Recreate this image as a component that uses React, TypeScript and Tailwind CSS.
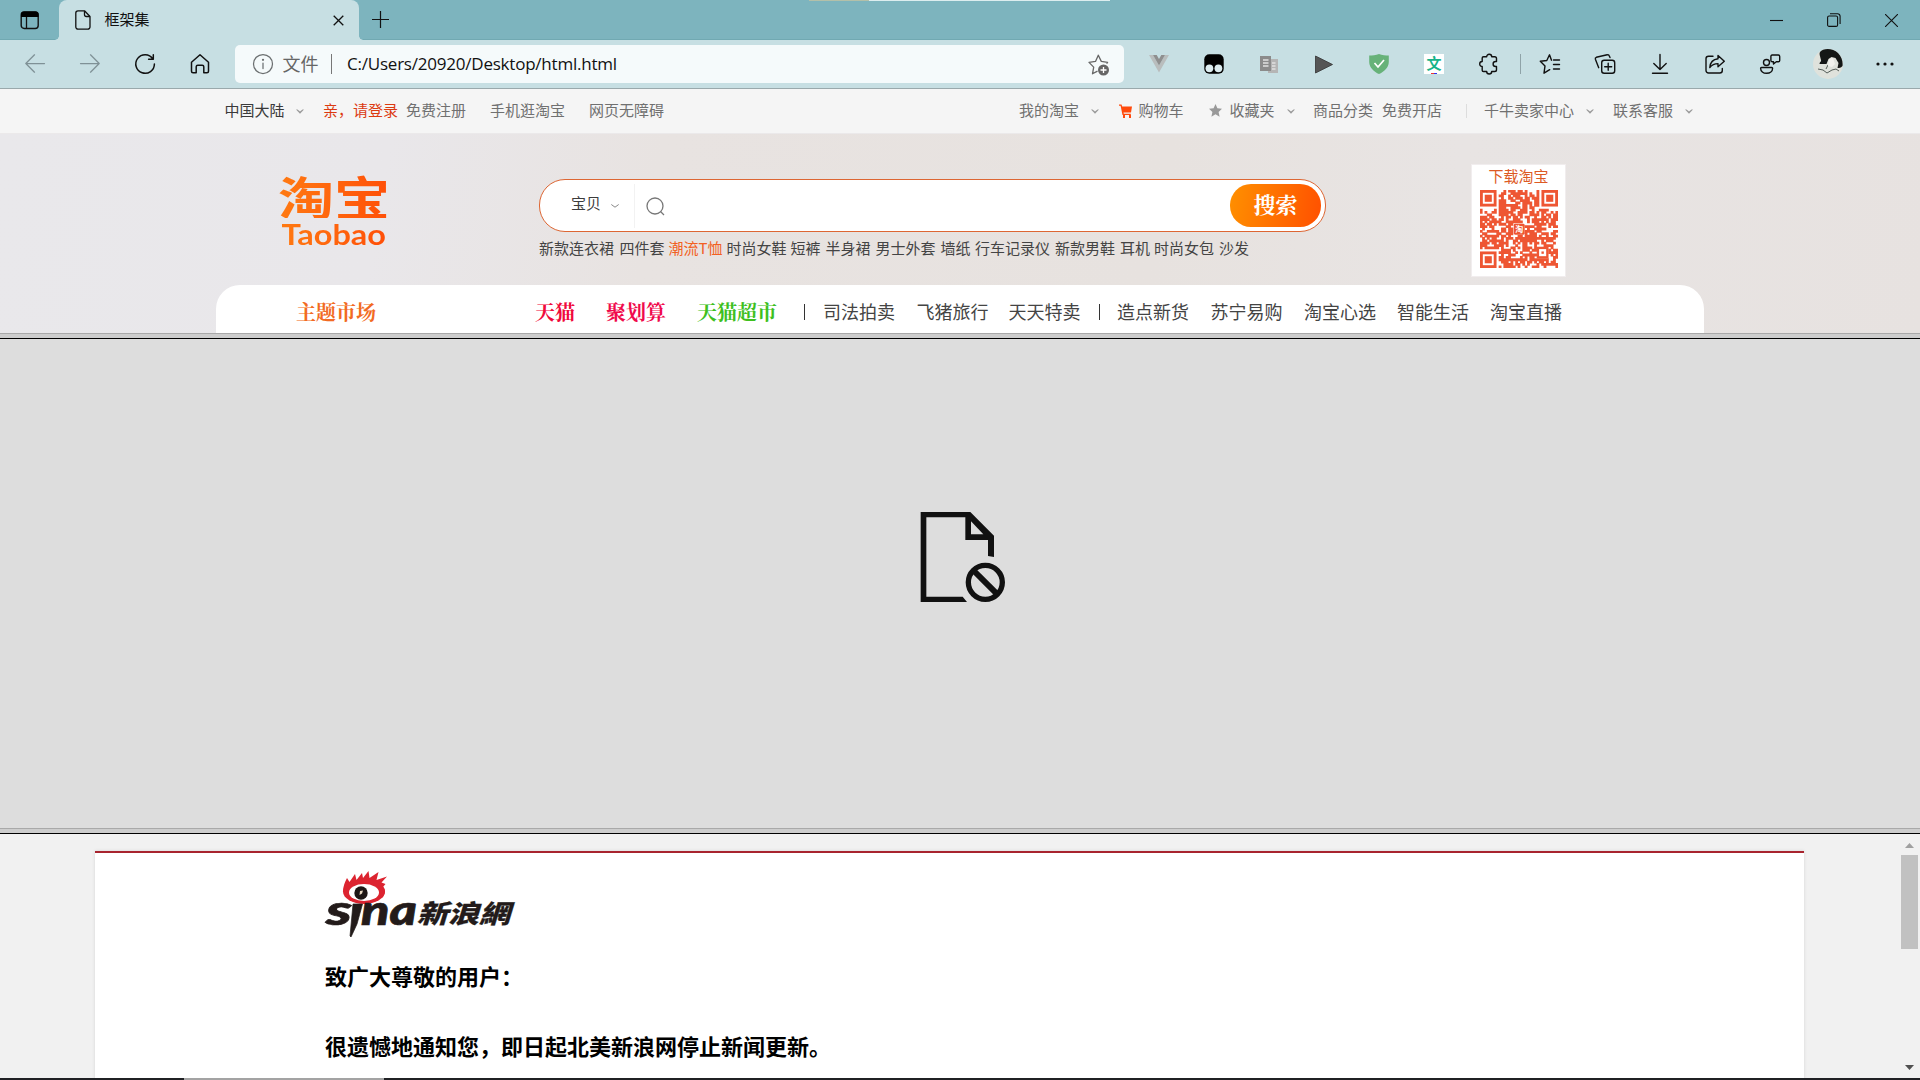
import React from 'react';

const SANS = "font-['Noto_Sans_CJK_SC',sans-serif]";
const SERIF = "font-['Noto_Serif_CJK_SC','Noto_Sans_CJK_SC',serif]";

function Cell({ children }: { children: React.ReactNode }) {
  return <div className="flex h-12 w-[55px] shrink-0 items-center justify-center">{children}</div>;
}

function Icon({ children, color = '#111', width = 1.25, size = 20 }: { children: React.ReactNode; color?: string; width?: number; size?: number }) {
  return (
    <svg width={size} height={size} viewBox="0 0 20 20" fill="none" stroke={color} strokeWidth={width} strokeLinecap="round" strokeLinejoin="round" className="shrink-0 overflow-visible">
      {children}
    </svg>
  );
}

function TitleBar() {
  return (
    <div className="relative flex h-10 bg-[#7db4be] shadow-[inset_0_-1px_0_#71a9b2]">
      <div className="flex w-[59px] items-center pl-5">
        <svg width="20" height="20" viewBox="0 0 20 20" fill="none">
          <rect x="1.2" y="2" width="17" height="16.5" rx="3" stroke="#111" strokeWidth="1.4" />
          <path d="M1 7V4.5a3 3 0 0 1 3-3h11.5a3 3 0 0 1 3 3V7z" fill="#000" />
          <path d="M6.5 7v11.5" stroke="#111" strokeWidth="1.3" />
        </svg>
      </div>
      <div className="relative flex w-[300px] items-center rounded-t-lg bg-[#c7dfe3]">
        <span className="absolute bottom-0 -left-1 h-1 w-1 bg-[radial-gradient(circle_at_0_0,#7db4be_3.5px,#c7dfe3_4px)]" />
        <span className="absolute -right-1 bottom-0 h-1 w-1 bg-[radial-gradient(circle_at_100%_0,#7db4be_3.5px,#c7dfe3_4px)]" />
        <svg width="16" height="20" viewBox="0 0 16 20" fill="none" stroke="#111" strokeWidth="1.3" strokeLinejoin="round" className="ml-4">
          <path d="M3 .8h6.5L15 6.500V17a2.200 2.200 0 0 1-2.200 2.200H3A2.200 2.200 0 0 1 .8 17V3A2.200 2.200 0 0 1 3 .8z" />
          <path d="M9.500 1v3.800c0 1 .7 1.700 1.700 1.700H15" />
        </svg>
        <span className={`${SANS} mb-[3px] ml-[13.500px] w-[228px] text-[15px] leading-none text-[#111]`}>框架集</span>
        <svg width="11" height="11" viewBox="0 0 11 11" stroke="#111" strokeWidth="1.3" className="mt-px">
          <path d="M.7.7l9.600 9.600M10.300.7L.7 10.300" />
        </svg>
      </div>
      <svg width="17" height="17" viewBox="0 0 17 17" stroke="#111" strokeWidth="1.200" className="mt-[11px] ml-[13px]">
        <path d="M8.500 0v17M0 8.500h17" />
      </svg>
      <div className="ml-auto flex items-center pr-[22px]">
        <svg width="13" height="13" viewBox="0 0 13 13" stroke="#111" strokeWidth="1.100"><path d="M0 6.500h13" /></svg>
        <svg width="14" height="14" viewBox="0 0 14 14" fill="none" stroke="#111" strokeWidth="1.100" className="ml-11">
          <rect x=".6" y="3" width="10" height="10.400" rx="1.500" />
          <path d="M3 .8h7.500a2.500 2.500 0 0 1 2.600 2.500V11" />
        </svg>
        <svg width="13" height="13" viewBox="0 0 13 13" stroke="#111" strokeWidth="1.100" className="ml-11"><path d="M0 0l13 13M13 0L0 13" /></svg>
      </div>
      <div className="absolute top-0 left-[809px] flex h-px">
        <span className="w-[60px] bg-[#b3c0a9]" />
        <span className="w-[241px] bg-[#dcedef]" />
      </div>
    </div>
  );
}

function Toolbar() {
  return (
    <div className="flex h-12 items-center bg-[#c7dfe3] pl-[7.500px]">
      <Cell><Icon color="#7f9196"><path d="M19.500 9.500H.8M9.500.8L.8 9.500l8.700 8.700" /></Icon></Cell>
      <Cell><Icon color="#7f9196"><path d="M.5 9.500h18.700M10.500.8l8.700 8.700-8.700 8.700" /></Icon></Cell>
      <Cell><Icon width={1.500}><path d="M17.800 4.800A9.300 9.300 0 1 0 19.400 10M18.300.8v4.500h-4.700" /></Icon></Cell>
      <Cell><Icon width={1.500}><path d="M1.500 8.300L10 .8l8.500 7.500v9c0 .9-.6 1.500-1.500 1.500h-3.200v-6c0-1-.6-1.600-1.600-1.600H7.800c-1 0-1.600.6-1.600 1.600v6H3c-.9 0-1.500-.6-1.500-1.500z" /></Icon></Cell>
      <div className="ml-[7.500px] flex h-[38px] w-[889px] shrink-0 items-center rounded-[5px] bg-[#f5fafb]">
        <div className="ml-[18px] flex"><Icon color="#6b6f70"><circle cx="10" cy="10" r="9.500" /><path d="M10 9v5.500" /><circle cx="10" cy="5.800" r=".5" fill="#6b6f70" /></Icon></div>
        <span className={`${SANS} mb-[2px] ml-[9.500px] w-[48.500px] text-[18px] leading-none text-[#666]`}>文件</span>
        <span className="h-5 w-px bg-[#777]" />
        <span className="mb-[2px] ml-[15px] w-[741px] font-['Open_Sans',sans-serif] text-[17px] leading-none tracking-[-0.220px] whitespace-nowrap text-[#111]">C:/Users/20920/Desktop/html.html</span>
        <svg width="22" height="22" viewBox="0 0 22 22" fill="none" className="mt-px">
          <path d="M18.600 9.600l1-1.200-6.300-1L10.300 1.200 7.500 7.400l-6.500 1 4.700 4.700-1.200 6.700 5-2.700" stroke="#666" strokeWidth="1.300" strokeLinejoin="round" />
          <circle cx="15.500" cy="16" r="5.500" fill="#666" />
          <path d="M15.500 13v6M12.500 16h6" stroke="#fff" strokeWidth="1.300" />
        </svg>
      </div>
      <div className="ml-[7.500px] flex">
        <Cell><svg width="20" height="18" viewBox="0 0 20 18"><path d="M0 0h4l6 10.500L16 0h4L10 17.500z" fill="#b9bdbd" /><path d="M4 0h3.700L10 4l2.300-4H16l-6 10.500z" fill="#8f8f8f" /></svg></Cell>
        <Cell><svg width="20" height="20" viewBox="0 0 20 20"><rect x=".3" y=".3" width="19.400" height="19.400" rx="5" fill="#000" /><circle cx="5.400" cy="14.300" r="3.900" fill="#dcecef" /><circle cx="14.400" cy="14.300" r="3.900" fill="#dcecef" /></svg></Cell>
        <Cell><svg width="18" height="18" viewBox="0 0 18 18"><path d="M8 4h10v14H8z" fill="#b5b5b5" /><path d="M0 1h11v15H0z" fill="#8b8b8b" /><path d="M3 5h5.500M3 8h5.500M3 11h5.500M12 8h3.500M12 11h3.500M12 14h3.500" stroke="#e1e1e1" strokeWidth="1.400" /></svg></Cell>
        <Cell><svg width="18" height="19" viewBox="0 0 18 19"><path d="M.5 1v17l17-8.500z" fill="#555" stroke="#333" strokeWidth=".8" /></svg></Cell>
        <Cell><svg width="20" height="20" viewBox="0 0 20 20"><path d="M10 0c3 1.500 7 1.500 9.800 1.500V8c0 5.500-5 10-9.800 12C5.200 18 .2 13.500.2 8V1.500C3 1.500 7 1.500 10 0z" fill="#67b279" /><path d="M5.500 9l3.500 4 6-7" fill="none" stroke="#fff" strokeWidth="1.700" /></svg></Cell>
        <Cell>
          <div className="flex h-5 w-5 flex-col items-center bg-white">
            <span className={`${SANS} mt-px h-[18px] text-[15px] leading-[16px] font-bold text-[#18b389]`}>文</span>
            <span className="flex h-px"><i className="w-[3px] bg-[#e33]" /><i className="w-[3px] bg-[#33e]" /></span>
          </div>
        </Cell>
        <Cell><Icon width={1.400}><path d="M4.500 2.800h3.200a2.500 2.500 0 0 1 5 0h3a1.800 1.800 0 0 1 1.800 1.800v2.900h-.9a2.500 2.500 0 0 0 0 5h.9v3.200a1.800 1.800 0 0 1-1.800 1.800h-3a2.500 2.500 0 0 1-5 0H4.500a1.300 1.300 0 0 1-1.300-1.300v-3.700a2.500 2.500 0 0 1 0-5V4.100a1.300 1.300 0 0 1 1.300-1.300z" /></Icon></Cell>
      </div>
      <span className="mr-[1.500px] ml-[3px] h-5 w-px bg-[#8fa3a8]" />
      <Cell><Icon width={1.400}><path d="M11.500 6.200L9.500.8 6.800 6.500l-6.500.8 4.700 4.600-1 7.300 5.700-3.500M13.500 6h6M13.500 10.500h6M13.500 15h6" /></Icon></Cell>
      <Cell><Icon width={1.400}><rect x="6.700" y="6.200" width="13" height="13" rx="2.500" /><path d="M13.200 9.200v7M9.700 12.700h7M15 3.500L14.200 1.700a1.500 1.500 0 0 0-2-.9L1.300 3.300A1.500 1.500 0 0 0 .4 5.200l3.300 8.500" /></Icon></Cell>
      <Cell><Icon width={1.400}><path d="M10 .5v15M3.800 9.500l6.200 6 6.200-6M2.500 19.200h15" /></Icon></Cell>
      <Cell><Icon width={1.400}><path d="M8 2.200H3.500a2.500 2.500 0 0 0-2.500 2.500v11.800A2.500 2.500 0 0 0 3.500 19h11.300a2.500 2.500 0 0 0 2.500-2.500v-2" /><path d="M13 1.500l6.300 5.800-6.300 5.500V9.600c-3.500 0-6 1-8.200 4C5.200 8.500 8 5.300 13 4.800z" /></Icon></Cell>
      <Cell><Icon width={1.400}><circle cx="6.500" cy="8.500" r="3" /><path d="M1.500 13.500h10.300c.5 0 .8.3.8.8 0 3-2.600 5-6 5s-6-2-6-5c0-.5.400-.8.900-.8zM12 1h6.300A1.400 1.400 0 0 1 19.700 2.400v4A1.400 1.400 0 0 1 18.300 7.800h-2L13.500 10V7.800h-1.200a1.400 1.400 0 0 1-1.400-1.400v-4A1.400 1.400 0 0 1 12 1z" /></Icon></Cell>
      <div className="flex w-[61px] shrink-0 justify-center">
        <svg width="30" height="30" viewBox="0 0 30 30">
          <circle cx="15" cy="15" r="15" fill="#dfe2dc" />
          <path d="M7 3C10-1 20-1 25 4c4 4 5 9 4.500 13-2 2-3 2-5 2l1-5-3-5-4-1-3 2-2 5-7 0c0-2 2-2 1.500-4-1-4-2-6-1-8z" fill="#141716" />
          <path d="M5 20l5 1 4 3 5-3 4-1 3 2M15 16l-2 4" fill="none" stroke="#555e59" strokeWidth="1" />
          <path d="M16 10l4-1 2 6-3 3-4-1z" fill="#f1f1ed" />
        </svg>
      </div>
      <div className="flex w-[54px] shrink-0 justify-center"><svg width="18" height="4" viewBox="0 0 18 4" fill="#111"><circle cx="2" cy="2" r="1.600" /><circle cx="9" cy="2" r="1.600" /><circle cx="16" cy="2" r="1.600" /></svg></div>
    </div>
  );
}

function Caret() {
  return <svg width="8" height="5" viewBox="0 0 8 5" className="mt-[3px] shrink-0"><path d="M0 .5h1.500L4 2.500 6.500.5H8L4 4.700z" fill="#999" /></svg>;
}

function SiteNav() {
  return (
    <div className={`${SANS} flex h-[45px] items-center border-b border-[#ebe9ea] bg-[#f5f5f5] pb-[3px] pl-[224.500px] text-[15px] leading-none font-normal whitespace-nowrap text-[#707070] *:shrink-0`}>
      <span className="w-[71.500px] text-[#3a3a3a]">中国大陆</span>
      <span className="w-[27px]"><Caret /></span>
      <span className="w-[83px] text-[#dc3a10]">亲，请登录</span>
      <span className="w-[84px]">免费注册</span>
      <span className="w-[99px]">手机逛淘宝</span>
      <span className="w-[430px]">网页无障碍</span>
      <span className="w-[72px]">我的淘宝</span>
      <span className="w-[28px]"><Caret /></span>
      <svg width="13" height="14" viewBox="0 0 13 14" className="mt-[2px] mr-[6.500px]">
        <path d="M0 .5h2.500l.7 2H13l-1 6H4.500l.3 1.300h7V11H3.500L1.600 1.800H0z" fill="#ff4a0c" />
        <path d="M4 11h2v3H4zM10 11h2v3h-2z" fill="#ff4a0c" />
      </svg>
      <span className="w-[70px]">购物车</span>
      <svg width="13" height="13" viewBox="0 0 13 13" className="mt-[2px] mr-[8px]"><path d="M6.500 0l1.900 4.300 4.600.5-3.400 3.100 1 4.800-4.100-2.500-4.100 2.500 1-4.800L0 4.800l4.600-.5z" fill="#999" /></svg>
      <span className="w-[57px]">收藏夹</span>
      <span className="w-[26.500px]"><Caret /></span>
      <span className="w-[69px]">商品分类</span>
      <span className="w-[84px]">免费开店</span>
      <span className="mt-[2px] h-[14px] w-px bg-[#ddd]" />
      <span className="ml-[17px] w-[102px]">千牛卖家中心</span>
      <span className="w-[27px]"><Caret /></span>
      <span className="w-[72px]">联系客服</span>
      <Caret />
    </div>
  );
}

const N = 33;
function qrCells(): string {
  let seed = 20411;
  let d = '';
  for (let y = 0; y < N; y++) {
    for (let x = 0; x < N; x++) {
      seed = (seed * 1103515245 + 12345) % 2147483648;
      const dark = (seed >> 12) % 100 < 62;
      const inFinder = (x < 8 && y < 8) || (x > N - 9 && y < 8) || (x < 8 && y > N - 9);
      const inLogo = x > 13 && x < 19 && y > 13 && y < 19;
      const inAlign = x > 23 && x < 29 && y > 23 && y < 29;
      if (dark && !inFinder && !inLogo && !inAlign) d += `M${x - 0.1} ${y - 0.1}h1.200v1.200h-1.200z`;
    }
  }
  return d;
}

function QrCode() {
  const corners = [[0, 0], [N - 7, 0], [0, N - 7]];
  return (
    <svg width="78" height="78" viewBox="0 0 33 33">
      <path d={qrCells()} fill="#ee5633" />
      {corners.map(([x, y]) => (
        <g key={`${x}-${y}`}>
          <rect x={x + 0.6} y={y + 0.6} width="5.800" height="5.800" fill="none" stroke="#ee5633" strokeWidth="1.200" />
          <rect x={x + 2} y={y + 2} width="3" height="3" fill="#ee5633" />
        </g>
      ))}
      <rect x="24.500" y="24.500" width="4" height="4" fill="none" stroke="#ee5633" />
      <rect x="26" y="26" width="1" height="1" fill="#ee5633" />
      <rect x="14.300" y="14.300" width="4.600" height="4.600" rx=".6" fill="#ee5633" />
      <text x="16.600" y="17.900" fontSize="3.400" textAnchor="middle" fill="#fff" fontFamily="Noto Sans CJK SC" fontWeight="700">淘</text>
    </svg>
  );
}

function TaobaoFrame() {
  return (
    <div className="flex h-[199px] flex-col bg-[linear-gradient(100deg,#e9e8eb_0%,#e9e7ea_20%,#e8e3e1_34%,#e7e2df_60%,#e8e4e3_75%,#e7e2e0_100%)]">
      <div className="flex h-[151px] pl-[276px]">
        <div className="flex w-[116px] shrink-0 flex-col items-center pt-[38px]">
          <span className={`${SANS} scale-x-[1.220] bg-[linear-gradient(90deg,#ff7a12,#ff4f08)] bg-clip-text text-[46px] leading-[46px] font-bold whitespace-nowrap text-transparent`}>淘宝</span>
          <span className="mt-[2px] scale-x-[1.120] bg-[linear-gradient(90deg,#ff7a12,#ff4f08)] bg-clip-text font-['Lato',sans-serif] text-[29px] leading-[28px] font-bold text-transparent">Taobao</span>
        </div>
        <div className="ml-[147px] w-[932px] shrink-0 pt-[45px]">
          <div className="flex h-[53px] w-[787px] items-center rounded-[26px] border border-[#dd6633] bg-white pr-1">
            <span className={`${SANS} ml-[31px] w-[40px] pb-[6px] text-[15px] leading-none font-normal text-[#3c3c3c]`}>宝贝</span>
            <svg width="8" height="4" viewBox="0 0 8 4" fill="none" stroke="#888"><path d="M.3.500L4 3.200 7.700.500" /></svg>
            <span className="ml-[15px] h-11 w-px bg-[#f2f2f2]" />
            <svg width="19" height="19" viewBox="0 0 19 19" fill="none" stroke="#777" strokeWidth="1.300" className="mt-[2px] ml-[11px]"><circle cx="9" cy="9" r="8" /><path d="M14.500 14.500l3.500 3.500" /></svg>
            <button className={`${SERIF} ml-auto h-[43px] w-[91px] rounded-[21px] bg-[linear-gradient(100deg,#ff9000,#ff5000)] pb-[3px] text-[22px] leading-none font-bold text-white`}>搜索</button>
          </div>
          <div className={`${SANS} mt-[8px] flex text-[15px] leading-none font-normal whitespace-nowrap text-[#444] *:shrink-0`}>
            <span className="w-[80.500px]">新款连衣裙</span>
            <span className="w-[49px]">四件套</span>
            <span className="w-[58px] text-[#f26022]">潮流T恤</span>
            <span className="w-[64px]">时尚女鞋</span>
            <span className="w-[35px]">短裤</span>
            <span className="w-[50px]">半身裙</span>
            <span className="w-[65px]">男士外套</span>
            <span className="w-[34.500px]">墙纸</span>
            <span className="w-[80px]">行车记录仪</span>
            <span className="w-[65px]">新款男鞋</span>
            <span className="w-[34px]">耳机</span>
            <span className="w-[65px]">时尚女包</span>
            <span>沙发</span>
          </div>
        </div>
        <div className="mt-[30px] flex h-[113px] w-[95px] shrink-0 flex-col items-center border border-[#f1edee] bg-white">
          <span className={`${SANS} mt-[3px] mb-[7px] text-[15px] leading-none font-normal text-[#dd5a24]`}>下载淘宝</span>
          <QrCode />
        </div>
      </div>
      <div className={`${SANS} ml-[216px] flex h-12 w-[1488px] items-center rounded-t-[24px] bg-white pt-[4px] pl-[80px] text-[18px] leading-none font-normal whitespace-nowrap text-[#444] *:shrink-0`}>
        <span className={`${SERIF} mt-px w-[239px] text-[20px] font-bold text-[#f26a22]`}>主题市场</span>
        <span className={`${SERIF} mt-px w-[71px] text-[20px] font-bold text-[#f00a3c]`}>天猫</span>
        <span className={`${SERIF} mt-px w-[91px] text-[20px] font-bold text-[#f00a4c]`}>聚划算</span>
        <span className={`${SERIF} mt-px w-[107px] text-[20px] font-bold text-[#3ec01e]`}>天猫超市</span>
        <span className="mt-px h-4 w-px bg-[#333]" />
        <span className="ml-[18px] w-[93.500px]">司法拍卖</span>
        <span className="w-[92px]">飞猪旅行</span>
        <span className="w-[90px]">天天特卖</span>
        <span className="mt-px h-4 w-px bg-[#333]" />
        <span className="ml-[17.500px] w-[93.500px]">造点新货</span>
        <span className="w-[93.500px]">苏宁易购</span>
        <span className="w-[93px]">淘宝心选</span>
        <span className="w-[93px]">智能生活</span>
        <span>淘宝直播</span>
      </div>
    </div>
  );
}

function FrameDivider() {
  return <div className="h-[6px] border-t border-b border-t-[#a9a9a9] border-b-black bg-[#cdcdcd]" />;
}

function BlockedFrame() {
  return (
    <div className="flex h-[489px] justify-center bg-[#dddddd] pt-[151px] pl-[10px]">
      <svg width="130" height="130" viewBox="0 0 390 390" fill="none" stroke="#111" strokeWidth="16">
        <path d="M201 336H62V66h149l71 71v64l-18-3v-48h-68V82H79v238h109z" fill="#111" stroke="none" />
        <path d="M213 94v39h37z" fill="#ddd" stroke="none" />
        <circle cx="256" cy="277" r="51" />
        <path d="M219 240l74 74" strokeWidth="18" />
      </svg>
    </div>
  );
}

function SinaLogo() {
  return (
    <svg width="192" height="70" viewBox="324 869 192 70" className="block overflow-visible">
      <ellipse cx="364" cy="891.500" rx="21" ry="12.500" fill="#dc2430" />
      <path d="M343 892C343 886 345 882 347 878L349.500 882L355 874L356.500 880L362 873L363 878L368.500 871L369.500 878L378.500 872L376.500 880L387 876.500L381.500 882.500L385.500 884L383 887C386 890 385.500 894 382 898Z" fill="#dc2430" />
      <ellipse cx="364" cy="892.500" rx="15" ry="8.500" fill="#fff" />
      <circle cx="361" cy="893" r="6.700" fill="#1d1715" />
      <path d="M359.500 895l.5-4 3-.5-1 3z" fill="#e8d9c2" />
      <g fill="#231b1a" stroke="#231b1a" strokeWidth=".7" fontStyle="italic" fontWeight="900">
        <text x="326" y="925" fontSize="41" textLength="26" lengthAdjust="spacingAndGlyphs" fontFamily="Lato, sans-serif">s</text>
        <text x="361" y="925" fontSize="41" textLength="56" lengthAdjust="spacingAndGlyphs" fontFamily="Lato, sans-serif">na</text>
        <path d="M353 904h9.500l-5.500 20-6 13-1-1z" />
        <text x="417" y="923" fontSize="25.500" strokeWidth=".2" textLength="93" lengthAdjust="spacingAndGlyphs" fontFamily="Noto Sans CJK TC, sans-serif">新浪網</text>
      </g>
    </svg>
  );
}

function SinaFrame() {
  return (
    <div className="flex h-[244px] overflow-hidden bg-[#f1f1f1] pl-[95px]">
      <div className={`${SANS} mt-[17px] h-[240px] w-[1709px] border-t-2 border-[#a8242e] bg-white pl-[229px] text-[22px] font-bold text-black shadow-[0_0_3px_#d4d4d4]`}>
        <div className="pt-4"><SinaLogo /></div>
        <p className="mt-[25px] ml-[1px] leading-[22px]">致广大尊敬的用户：</p>
        <p className="mt-[48px] ml-[1px] leading-[22px]">很遗憾地通知您，即日起北美新浪网停止新闻更新。</p>
      </div>
      <div className="ml-auto flex w-[19px] flex-col">
        <svg width="9" height="5" viewBox="0 0 9 5" className="mt-[9px] ml-[4px]"><path d="M4.500 0L9 5H0z" fill="#a0a0a0" /></svg>
        <div className="mt-[7px] h-[94px] w-[17px] bg-[#c1c1c1]" />
        <svg width="9" height="5" viewBox="0 0 9 5" className="mt-auto mb-[8px] ml-[4px]"><path d="M4.500 5L9 0H0z" fill="#505050" /></svg>
      </div>
    </div>
  );
}

export default function App() {
  return (
    <div className="h-[1080px] w-[1920px] overflow-hidden">
      <TitleBar />
      <Toolbar />
      <div className="h-px bg-[#9aa9ac]" />
      <SiteNav />
      <TaobaoFrame />
      <FrameDivider />
      <BlockedFrame />
      <FrameDivider />
      <SinaFrame />
      <div className="flex h-[2px] bg-[#202124] pl-[184px]"><span className="w-[200px] bg-[#a3a3a3]" /></div>
    </div>
  );
}
